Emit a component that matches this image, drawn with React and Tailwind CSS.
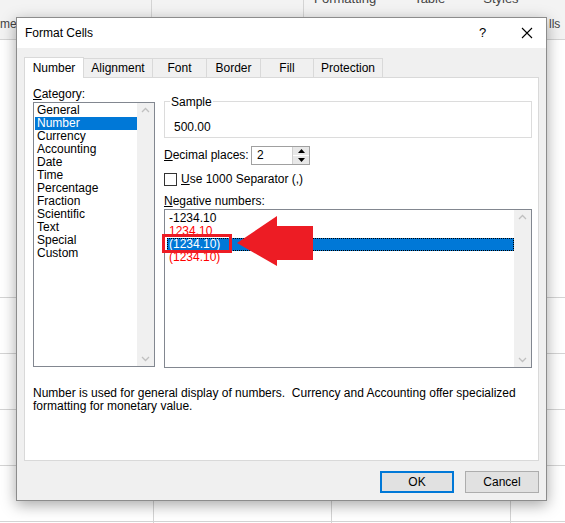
const F = { fontFamily: '"Segoe UI", "Liberation Sans", "Noto Sans", sans-serif' };

function U({ c, rest }) {
  return (<><span className="underline">{c}</span>{rest}</>);
}

function ScrollBar({ h }) {
  return (
    <div className="w-[17px] bg-[#f0f0f0] flex flex-col justify-between items-center py-[4px]" style={{ height: h }}>
      <svg width="9" height="6" viewBox="0 0 9 6"><path d="M1 5 L4.5 1.5 L8 5" stroke="#c0c0c0" strokeWidth="1.3" fill="none" /></svg>
      <svg width="9" height="6" viewBox="0 0 9 6"><path d="M1 1 L4.5 4.5 L8 1" stroke="#c0c0c0" strokeWidth="1.3" fill="none" /></svg>
    </div>
  );
}

export default function App() {
  const cats = ["General", "Number", "Currency", "Accounting", "Date", "Time", "Percentage", "Fraction", "Scientific", "Text", "Special", "Custom"];
  const tabs = [["Alignment", 69], ["Font", 54], ["Border", 54], ["Fill", 53], ["Protection", 69]];
  return (
    <div className="relative w-[565px] h-[523px] bg-white overflow-hidden text-[12px] text-black" style={F}>
      {/* spreadsheet behind */}
      <div className="h-[40px] bg-[#f3f3f3] border-b border-[#d4d4d4] flex text-[#444]">
        <div className="w-[152px] border-r border-[#d4d4d4]"></div>
        <div className="w-[152px] border-r border-[#d4d4d4]"></div>
        <div className="flex-1 flex gap-[38px] pl-[10px] -mt-[8px] leading-[14px] text-[13px]"><span>Formatting</span><span>Table</span><span>Styles</span></div>
      </div>
      {[297, 353, 409, 465, 521].map(y => <div key={y} className="absolute left-0 right-0 h-px bg-[#d4d4d4]" style={{ top: y }} />)}
      {[153, 331, 510].map(x => <div key={x} className="absolute top-[40px] bottom-0 w-px bg-[#d4d4d4]" style={{ left: x }} />)}
      <span className="absolute left-0 top-[15px] text-[#444]">me</span>
      <span className="absolute left-[549px] top-[15px] text-[#444]">lls</span>

      {/* dialog */}
      <div className="absolute left-[16px] top-[17px] w-[531px] h-[484px] bg-[#f0f0f0] border border-[#8c8c8c] shadow-[0_4px_14px_rgba(0,0,0,0.35)] flex flex-col">
        <div className="h-[30px] bg-white flex items-center pl-[8px]">
          <span className="flex-1 text-[12px]">Format Cells</span>
          <span className="w-[24px] text-[13px]">?</span>
          <svg className="mr-[13px] ml-[18px]" width="12" height="12" viewBox="0 0 12 12"><path d="M1 1 L11 11 M11 1 L1 11" stroke="#000" strokeWidth="1.1" /></svg>
        </div>
        <div className="px-[7px] pt-[8px]">
          <div className="flex items-end h-[21px]">
            <div className="w-[60px] h-[21px] bg-white border border-b-0 border-[#d9d9d9] flex items-center justify-center relative z-10 -mb-px">Number</div>
            {tabs.map(([t, w]) => (
              <div key={t} className="h-[19px] border border-b-0 border-l-0 border-[#d9d9d9] flex items-center justify-center" style={{ width: w }}>{t}</div>
            ))}
          </div>
          <div className="h-[384px] bg-white border border-[#d9d9d9] px-[8px] pt-[8px] flex flex-col">
            <div className="flex gap-[9px]">
              <div>
                <div className="h-[16px] leading-[16px]"><U c="C" rest="ategory:" /></div>
                <div className="w-[122px] h-[265px] border border-[#828790] flex">
                  <div className="flex-1 pt-[1px] pl-px">
                    {cats.map(c => (
                      <div key={c} className={"h-[13px] leading-[13px] pl-[2px] " + (c === "Number" ? "bg-[#0078d7] text-white" : "")}>{c}</div>
                    ))}
                  </div>
                  <ScrollBar h={263} />
                </div>
              </div>
              <div className="flex-1 pt-[15px]">
                <div className="relative h-[37px] border border-[#dcdcdc] pl-[9px] pt-[16px]">
                  <span className="absolute -top-[9px] left-[5px] bg-white px-px">Sample</span>
                  500.00
                </div>
                <div className="flex items-center mt-[8px] h-[18px] whitespace-nowrap">
                  <span className="w-[87px] shrink-0"><U c="D" rest="ecimal places:" /></span>
                  <div className="w-[59px] h-[19px] border border-[#a0a0a0] flex shrink-0">
                    <span className="flex-1 pl-[5px] leading-[17px]">2</span>
                    <div className="w-[17px] flex flex-col border-l border-[#d0d0d0]">
                      <div className="flex-1 bg-[#e8e8e8] border-b border-white flex items-center justify-center"><svg width="7" height="4"><path d="M0 4 L3.5 0 L7 4Z" fill="#000" /></svg></div>
                      <div className="flex-1 bg-[#e8e8e8] flex items-center justify-center"><svg width="7" height="4"><path d="M0 0 L3.5 4 L7 0Z" fill="#000" /></svg></div>
                    </div>
                  </div>
                </div>
                <div className="flex items-center gap-[4px] mt-[8px] h-[14px]">
                  <div className="w-[13px] h-[13px] border border-[#333] bg-white"></div>
                  <span><U c="U" rest="se 1000 Separator (,)" /></span>
                </div>
                <div className="mt-[8px] h-[15px] leading-[15px]"><U c="N" rest="egative numbers:" /></div>
                <div className="w-[368px] h-[159px] border border-[#828790] flex">
                  <div className="flex-1 pt-[2px] pl-[2px]">
                    <div className="h-[13px] leading-[13px] pl-[2px]">-1234.10</div>
                    <div className="h-[13px] leading-[13px] pl-[2px] text-[#ff0000]">1234.10</div>
                    <div className="h-[13px] leading-[13px] pl-[2px] bg-[#0078d7] text-white outline-1 outline-dotted outline-black -outline-offset-1">(1234.10)</div>
                    <div className="h-[13px] leading-[13px] pl-[2px] text-[#ff0000]">(1234.10)</div>
                  </div>
                  <ScrollBar h={157} />
                </div>
              </div>
            </div>
            <div className="mt-[19px] leading-[13px] w-[490px]">Number is used for general display of numbers.&nbsp; Currency and Accounting offer specialized formatting for monetary value.</div>
          </div>
          <div className="flex justify-end gap-[11px] pt-[10px]">
            <div className="w-[74px] h-[22px] bg-[#e1e1e1] border-2 border-[#0078d7] flex items-center justify-center">OK</div>
            <div className="w-[74px] h-[22px] bg-[#e1e1e1] border border-[#adadad] flex items-center justify-center">Cancel</div>
          </div>
        </div>
      </div>

      {/* red annotation */}
      <div className="absolute left-[162px] top-[234px] w-[70px] h-[19px] border-[3px] border-[#ed1c24]"></div>
      <svg className="absolute left-[236px] top-[216px]" width="80" height="50" viewBox="0 0 80 50">
        <path d="M1 27 L41 0 L41 10 L77 10 L77 44 L41 44 L41 50 Z" fill="#ed1c24" />
      </svg>
    </div>
  );
}
